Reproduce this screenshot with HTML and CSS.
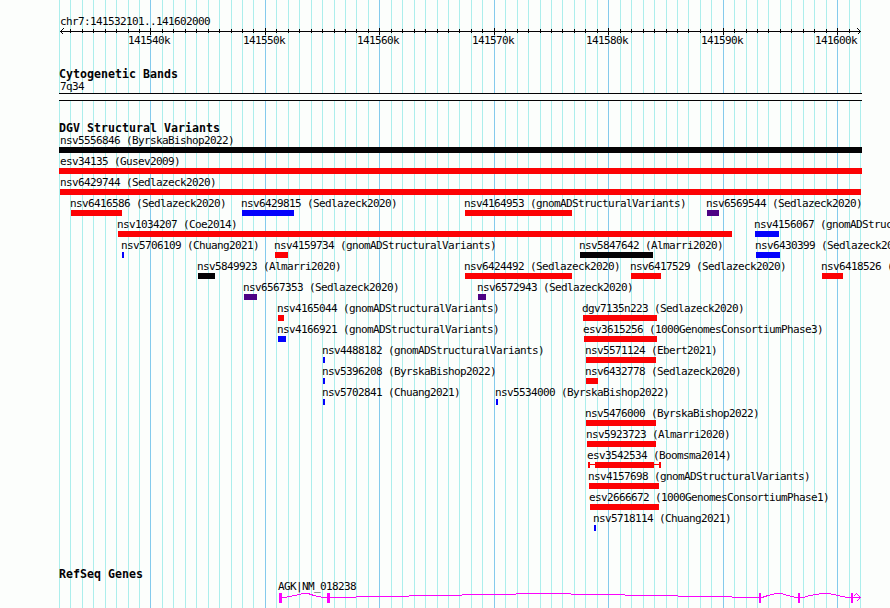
FILE: index.html
```html
<!DOCTYPE html>
<html lang="en">
<head>
<meta charset="utf-8">
<title>chr7:141532101..141602000</title>
<link rel="stylesheet" href="styles.css">
</head>
<body>
<svg class="gridlines" width="890" height="608" aria-hidden="true"><path id="minor" class="minor"/><path id="major" class="major"/></svg>
<main class="browser">
  <section class="ruler">
    <p class="label region">chr7:141532101..141602000</p>
    <svg class="axis" width="890" height="8"><path id="ticks" d="M60 3.5H861M63.5 0.5L60.5 3.5L63.5 6.5M857.5 0.5L860.5 3.5L857.5 6.5"/></svg>
    <div class="scale" id="scale"></div>
  </section>
  <section class="bands">
    <h2>Cytogenetic Bands</h2>
    <p class="label band-name">7q34</p>
    <div class="band"></div>
  </section>
  <section class="variants">
    <h2>DGV Structural Variants</h2>
    <div id="lanes"></div>
  </section>
  <section class="genes">
    <h2>RefSeq Genes</h2>
    <p class="label gene-name">AGK|NM_018238</p>
    <svg class="gene" width="890" height="12">
      <path class="intron" d="M282 5.5H285L289 4.5L295 3.5L303 1.5H308L314 3.5L323 5.5H356M356 4.5H409M409 3.5H462M462 2.5H516M516 1.5H571M571 2.5H625M625 3.5H678M678 4.5H732M732 5.5H762L768 3.5L776 1.5H781L788 3.5L796 5.5H803L810 3.5L822 1.5H829L838 3.5L847 5.5H861M853.5 4.5L856.5 1.5L860.5 5.5L856.5 9.5"/>
      <path class="exon" d="M279 1h3v10h-3zM327 1h3v10h-3zM759 1h2v10h-2zM798 1h2v10h-2zM851 1h2v10h-2z"/>
    </svg>
  </section>
</main>
<script src="app.js"></script>
</body>
</html>
```
FILE: styles.css
```css
* { box-sizing: border-box; }
html, body { margin: 0; width: 890px; height: 608px; overflow: hidden; background: #fcfefc; }
body { position: relative; color: #040204; font: 11px/12px "DejaVu Sans Mono", "Liberation Mono", monospace; }
h2, p { margin: 0; }
h2 { margin-left: 59px; font-size: 11.6px; line-height: 12px; letter-spacing: 0.016px; }
.label { display: block; white-space: nowrap; letter-spacing: -0.622px; height: 12px; }
.gridlines { position: absolute; left: 0; top: 0; }
.gridlines path, .axis path { fill: none; stroke-width: 1; shape-rendering: crispEdges; }
.minor { stroke: #aceeec; }
.major { stroke: #84caec; }
.browser { position: relative; width: 890px; height: 608px; overflow: hidden; display: flex; flex-direction: column; }
.ruler { height: 68px; padding-top: 16px; }
.region, .band-name { margin-left: 60px; }
.axis { display: block; }
.axis path { stroke: #040204; }
.scale { display: grid; margin-top: -1px; }
.scale .label { grid-area: 1 / 1; }
.bands { height: 54px; }
.band-name { margin-top: 1px; }
.band { width: 803px; height: 8px; margin-left: 59px; background: #fcfefc; border: solid #040204; border-width: 1px 0; }
.variants { height: 446px; }
#lanes { display: grid; grid-auto-rows: 21px; margin-top: 1px; }
.lane { display: grid; grid-template-columns: 890px; overflow: hidden; }
.feature { grid-area: 1 / 1; }
.bar { height: 6px; background: currentColor; }
.red { color: #fc0204; }
.blue { color: #0402fc; }
.black { color: #040204; }
.purple { color: #4c0284; }
.uncertain { display: flex; align-items: center; justify-content: space-between; background: linear-gradient(currentColor, currentColor) 0 2px / 100% 1px no-repeat; }
.uncertain i { width: 2px; height: 6px; background: currentColor; }
.uncertain b { width: 59px; height: 6px; background: currentColor; }
.gene-name { margin-left: 278px; padding-top: 1px; }
.gene { display: block; shape-rendering: crispEdges; }
.intron { fill: none; stroke: #fc02fc; }
.exon { fill: #fc02fc; }
```
FILE: app.js
```js
const minor = [59,70,82,93,105,116,128,139,162,173,185,196,208,219,231,242,253,276,288,299,311,322,334,345,356,368,391,402,414,425,437,448,459,471,482,505,517,528,540,551,562,574,585,597,620,631,643,654,666,677,688,700,711,734,746,757,768,780,791,803,814,826,849,860];
const major = [150,265,379,494,608,723,837];
const lines = (xs, a, b) => xs.map(x => `M${x + 0.5} ${a}V${b}`).join('');
document.getElementById('minor').setAttribute('d', lines(minor, 0, 608));
document.getElementById('major').setAttribute('d', lines(major, 0, 608));
const ticks = document.getElementById('ticks');
ticks.setAttribute('d', ticks.getAttribute('d') + lines(minor.slice(1, -1), 1, 5) + lines(major, 0, 7));
document.getElementById('scale').innerHTML = major.map((x, i) =>
  `<span class="label" style="margin-left:${x - 22}px">${141540 + i * 10}k</span>`).join('');

// Each feature: name, study, bar start, bar end, colour, optional label start
const S = 'Sedlazeck2020', G = 'gnomADStructuralVariants', B = 'ByrskaBishop2022', A = 'Almarri2020', C = 'Chuang2021';
const lanes = [
  [['nsv5556846', B, 59, 862, 'black', 60]],
  [['esv34135', 'Gusev2009', 59, 862, 'red', 60]],
  [['nsv6429744', S, 60, 861, 'red', 60]],
  [['nsv6416586', S, 71, 122, 'red'], ['nsv6429815', S, 242, 294, 'blue'], ['nsv4164953', G, 465, 572, 'red'], ['nsv6569544', S, 707, 719, 'purple']],
  [['nsv1034207', 'Coe2014', 118, 732, 'red'], ['nsv4156067', G, 755, 779, 'blue']],
  [['nsv5706109', C, 122, 124, 'blue'], ['nsv4159734', G, 275, 288, 'red'], ['nsv5847642', A, 580, 653, 'black'], ['nsv6430399', S, 756, 780, 'blue']],
  [['nsv5849923', A, 198, 215, 'black'], ['nsv6424492', S, 465, 572, 'red'], ['nsv6417529', S, 631, 661, 'red'], ['nsv6418526', S, 822, 843, 'red']],
  [['nsv6567353', S, 244, 257, 'purple'], ['nsv6572943', S, 478, 486, 'purple']],
  [['nsv4165044', G, 278, 284, 'red'], ['dgv7135n223', S, 583, 657, 'red']],
  [['nsv4166921', G, 278, 286, 'blue'], ['esv3615256', '1000GenomesConsortiumPhase3', 584, 657, 'red']],
  [['nsv4488182', G, 323, 325, 'blue'], ['nsv5571124', 'Ebert2021', 586, 656, 'red']],
  [['nsv5396208', B, 323, 325, 'blue'], ['nsv6432778', S, 586, 598, 'red']],
  [['nsv5702841', C, 323, 325, 'blue'], ['nsv5534000', B, 496, 498, 'blue']],
  [['nsv5476000', B, 586, 656, 'red']],
  [['nsv5923723', A, 587, 656, 'red']],
  [['esv3542534', 'Boomsma2014', 588, 661, 'red uncertain']],
  [['nsv4157698', G, 589, 659, 'red']],
  [['esv2666672', '1000GenomesConsortiumPhase1', 590, 659, 'red']],
  [['nsv5718114', C, 594, 596, 'blue']]
];
document.getElementById('lanes').innerHTML = lanes.map(l => '<div class="lane">' + l.map(([n, s, a, b, c, t]) =>
  `<div class="feature"><span class="label" style="margin-left:${t || a - 1}px">${n} (${s})</span>` +
  `<div class="bar ${c}" style="margin-left:${a}px;width:${b - a}px">${c.includes('uncertain') ? '<i></i><b></b><i></i>' : ''}</div></div>`).join('') + '</div>').join('');
```
